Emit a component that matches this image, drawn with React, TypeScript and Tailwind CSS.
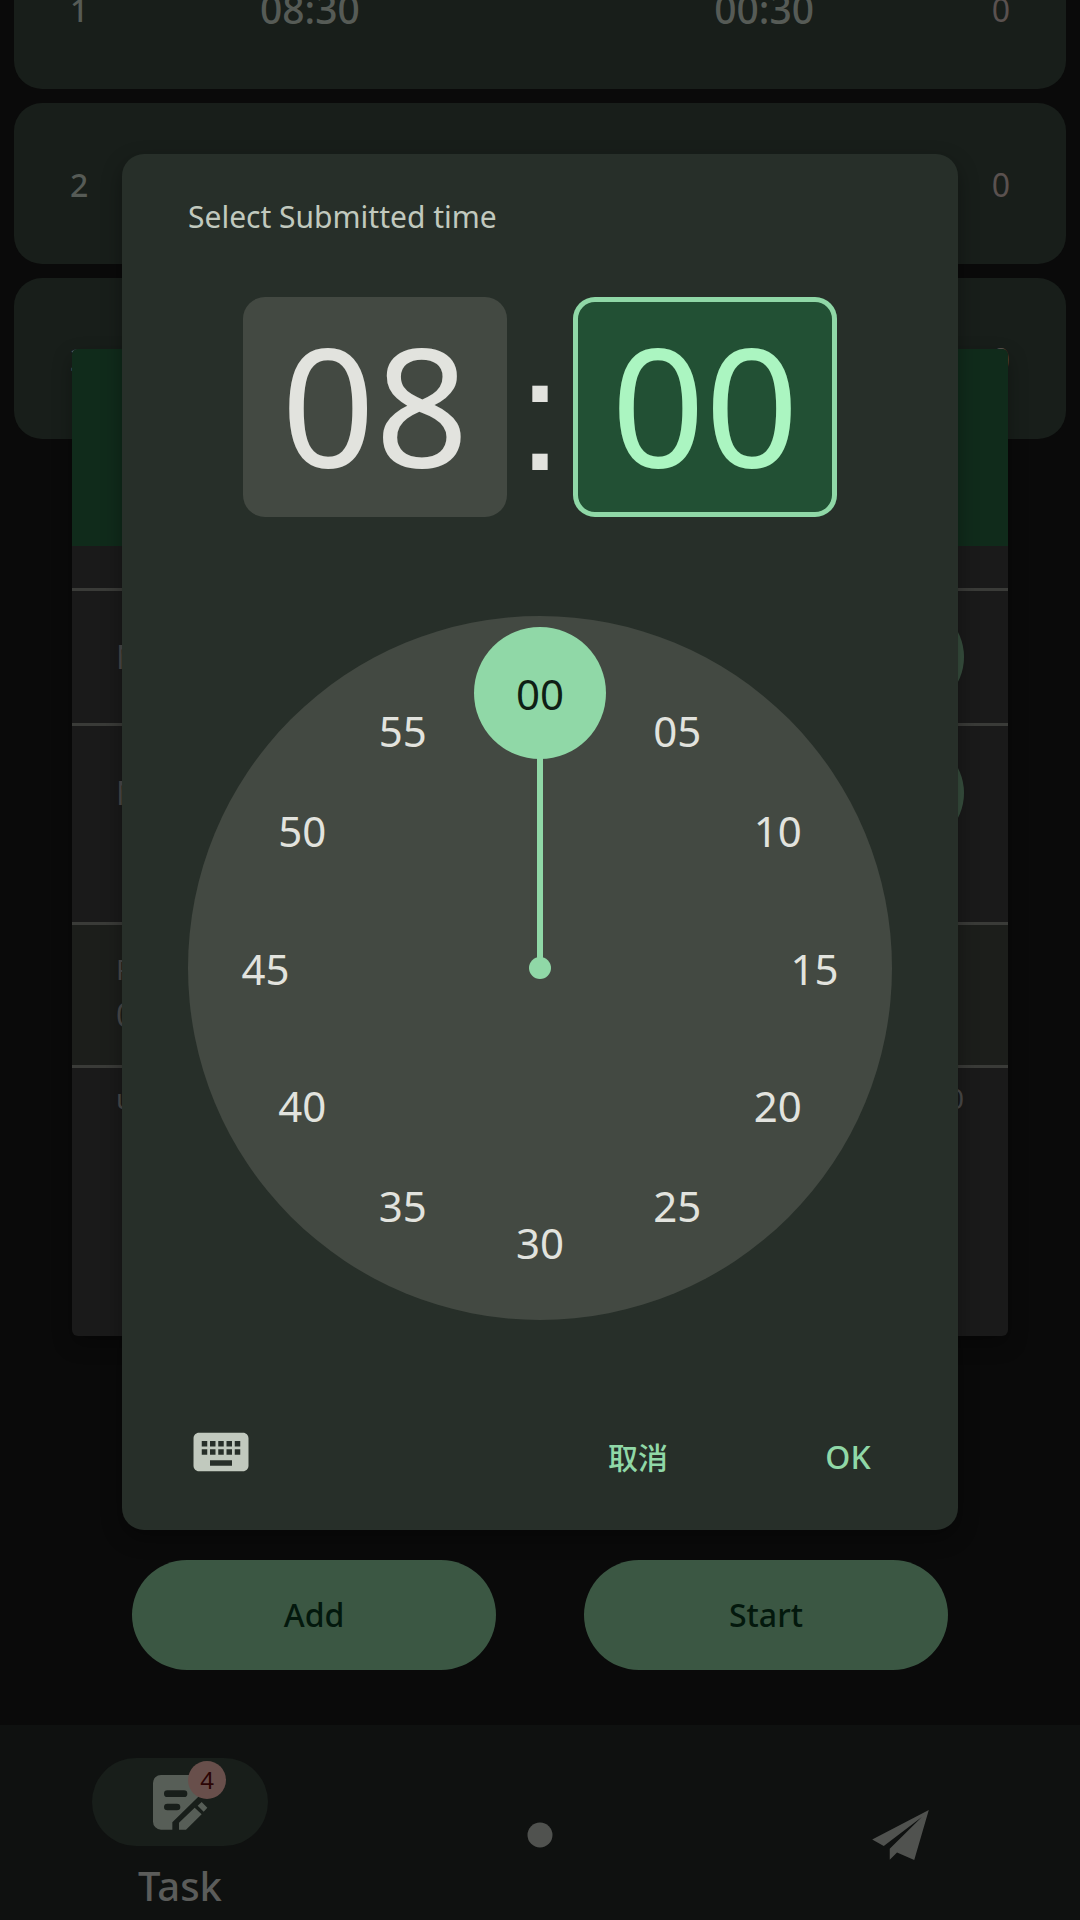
import React from "react";

type Entry = { index: string; first?: string; second?: string; count: string };

const entries: Entry[] = [
  { index: "1", first: "08:30", second: "00:30", count: "0" },
  { index: "2", count: "0" },
  { index: "3", count: "0" },
];

const minutes = ["00", "05", "10", "15", "20", "25", "30", "35", "40", "45", "50", "55"];

function EntryCard({ entry }: { entry: Entry }) {
  return (
    <li className="grid h-[161px] grid-cols-[120px_1fr_1fr_120px] items-center rounded-[28px] bg-[#181e1a] px-14 pt-[2px] text-[#565b56]">
      <span className="text-[32px] font-medium">{entry.index}</span>
      <span className="pl-[70px] text-[39px] font-medium">{entry.first}</span>
      <span className="pr-[76px] text-right text-[39px] font-medium">{entry.second}</span>
      <span className="text-right text-[32px] text-[#5a514f]">{entry.count}</span>
    </li>
  );
}

function TaskSheet() {
  return (
    <section className="overflow-hidden rounded-md bg-[#1a1a1a] text-[#4b4b4b] shadow-[0_8px_20px_0_rgba(0,0,0,0.3)]">
      <div className="h-[197px] bg-[#102b1b]" />
      <div className="h-[42px]" />
      <div className="flex h-[135px] items-center justify-between border-t-3 border-[#3a3b38] px-11">
        <span className="text-[32px]">N</span>
        <button type="button" aria-label="Edit first" className="size-[110px] rounded-full bg-[#38503f]" />
      </div>
      <div className="flex h-[199px] items-start justify-between border-t-3 border-[#3a3b38] px-11 pt-3">
        <span className="text-[32px] leading-[110px]">N</span>
        <button type="button" aria-label="Edit second" className="size-[110px] rounded-full bg-[#38503f]" />
      </div>
      <div className="flex h-[143px] flex-col border-t-3 border-[#3a3b38] bg-[#1c1e1b] px-11 pt-[22px]">
        <span className="text-[28px] leading-[44px]">P</span>
        <span className="text-[32px] leading-[48px]">0</span>
      </div>
      <div className="flex h-[271px] items-start justify-between border-t-3 border-[#3a3b38] px-11 pt-2 text-[28px] leading-[44px]">
        <span>u</span>
        <span>0</span>
      </div>
    </section>
  );
}

function ClockDial() {
  return (
    <div className="relative aspect-square w-full rounded-full bg-[#434942]">
      <div className="absolute top-[12%] left-1/2 h-[38%] w-[6px] -translate-x-1/2 bg-[#90d8a7]" />
      <div className="absolute top-1/2 left-1/2 size-[22px] -translate-x-1/2 -translate-y-1/2 rounded-full bg-[#90d8a7]" />
      {minutes.map((label, i) => {
        const angle = (i * Math.PI) / 6;
        return (
          <button
            key={label}
            type="button"
            aria-pressed={i === 0}
            className={
              i === 0
                ? "absolute flex size-[132px] -translate-x-1/2 -translate-y-1/2 items-center justify-center rounded-full bg-[#90d8a7] text-[42px] text-[#0f1f15]"
                : "absolute flex size-[132px] -translate-x-1/2 -translate-y-1/2 items-center justify-center rounded-full text-[42px] text-[#e2e3de]"
            }
            style={{
              left: `${50 + 39 * Math.sin(angle)}%`,
              top: `${50 - 39 * Math.cos(angle)}%`,
            }}
          >
            {label}
          </button>
        );
      })}
    </div>
  );
}

function TimePicker() {
  return (
    <div
      role="dialog"
      aria-labelledby="picker-title"
      className="w-full rounded-[22px] bg-[#272f29] px-[66px] pt-[43px] pb-[31px] shadow-[0_8px_20px_0_rgba(0,0,0,0.35)]"
    >
      <h2 id="picker-title" className="text-[30px] leading-[40px] text-[#c1c9be]">
        Select Submitted time
      </h2>
      <div className="mt-[60px] flex h-[220px] justify-center text-[164px] leading-[214px]">
        <button type="button" className="flex w-[264px] justify-center rounded-[22px] bg-[#434942] text-[#e2e3de]">
          08
        </button>
        <span className="w-[66px] text-center font-['Liberation_Sans',sans-serif] text-[160px] leading-[236px] text-[#e2e3de]">
          :
        </span>
        <button
          type="button"
          className="flex w-[264px] justify-center rounded-[22px] bg-[#225034] text-[#abf5c1] ring-5 ring-[#90d8a7] ring-inset"
        >
          00
        </button>
      </div>
      <div className="mt-[99px]">
        <ClockDial />
      </div>
      <div className="mt-[99px] flex items-start">
        <button type="button" aria-label="Keyboard" className="mr-auto">
          <svg viewBox="0 0 24 24" className="size-[66px] fill-[#c1c9be]">
            <path d="M20 5H4c-1.1 0-1.99.9-1.99 2L2 17c0 1.1.9 2 2 2h16c1.1 0 2-.9 2-2V7c0-1.1-.9-2-2-2zm-9 3h2v2h-2V8zm0 3h2v2h-2v-2zM8 8h2v2H8V8zm0 3h2v2H8v-2zm-1 2H5v-2h2v2zm0-3H5V8h2v2zm9 7H8v-2h8v2zm0-4h-2v-2h2v2zm0-3h-2V8h2v2zm3 3h-2v-2h2v2zm0-3h-2V8h2v2z" />
          </svg>
        </button>
        <div className="-mr-11 flex gap-[34px] text-[30px] font-medium text-[#90d8a7]">
          <button type="button" className="h-20 w-44 pb-1">取消</button>
          <button type="button" className="h-20 w-44 pb-1 text-[32px]">OK</button>
        </div>
      </div>
    </div>
  );
}

function BottomNav() {
  return (
    <nav className="grid grid-cols-3 bg-[#0f1110] text-[#50524f]">
      <a href="#task" className="flex flex-col items-center pt-[33px] pb-1">
        <span className="relative flex h-[88px] w-44 items-center justify-center rounded-full bg-[#181e1a]">
          <svg viewBox="279 163 165 165" className="size-[55px]">
            <path
              fill="#575e57"
              fillRule="evenodd"
              d="M303 163H419a22 22 0 0 1 22 22V203L337 305V327H303a24 24 0 0 1-24-24V187a24 24 0 0 1 24-24ZM322 209a10 10 0 0 0 0 20H372a10 10 0 0 0 0-20ZM322 249a10 10 0 0 0 0 20H351a10 10 0 0 0 0-20Z"
            />
            <path fill="#575e57" d="M357 327V306L404 261L425 281L378 327ZM413 255L425 244L442 261L431 273Z" />
          </svg>
          <span className="absolute top-[3px] left-24 flex size-[38px] items-center justify-center rounded-full bg-[#684f4b] text-[24px] leading-[38px] text-[#2b0505]">
            4
          </span>
        </span>
        <span className="mt-[10px] text-[40px] leading-[60px] font-medium text-[#5b5c5a]">Task</span>
      </a>
      <a href="#record" aria-label="Record" className="flex justify-center pt-[97px]">
        <svg viewBox="0 0 26 26" className="size-[26px] fill-current">
          <circle cx="13" cy="13" r="12.5" />
        </svg>
      </a>
      <a href="#send" aria-label="Send" className="flex justify-center pt-[85px]">
        <svg viewBox="1115 210 171 151" className="h-[50px] w-[57px] fill-current">
          <path d="M1286 210L1115 299L1150 319L1265 231L1168 327V360L1190 338L1242 361Z" />
        </svg>
      </a>
    </nav>
  );
}

export default function App() {
  return (
    <div className="relative flex min-h-screen flex-col overflow-hidden bg-[#0a0a0a] font-['Noto_Sans','Noto_Sans_CJK_SC',sans-serif]">
      <ul className="-mt-[72px] flex flex-col gap-[14px] px-[14px]">
        {entries.map((entry) => (
          <EntryCard key={entry.index} entry={entry} />
        ))}
      </ul>

      <div className="mt-auto flex gap-[88px] px-[132px] pb-[55px] text-[32px] font-medium text-[#03180d]">
        <button type="button" className="h-[110px] flex-1 rounded-full bg-[#3b5743]">Add</button>
        <button type="button" className="h-[110px] flex-1 rounded-full bg-[#3b5743]">Start</button>
      </div>
      <BottomNav />

      <div className="absolute inset-x-0 top-0 px-[72px] pt-[349px]">
        <TaskSheet />
      </div>
      <div className="absolute inset-x-0 top-0 px-[122px] pt-[154px]">
        <TimePicker />
      </div>
    </div>
  );
}
